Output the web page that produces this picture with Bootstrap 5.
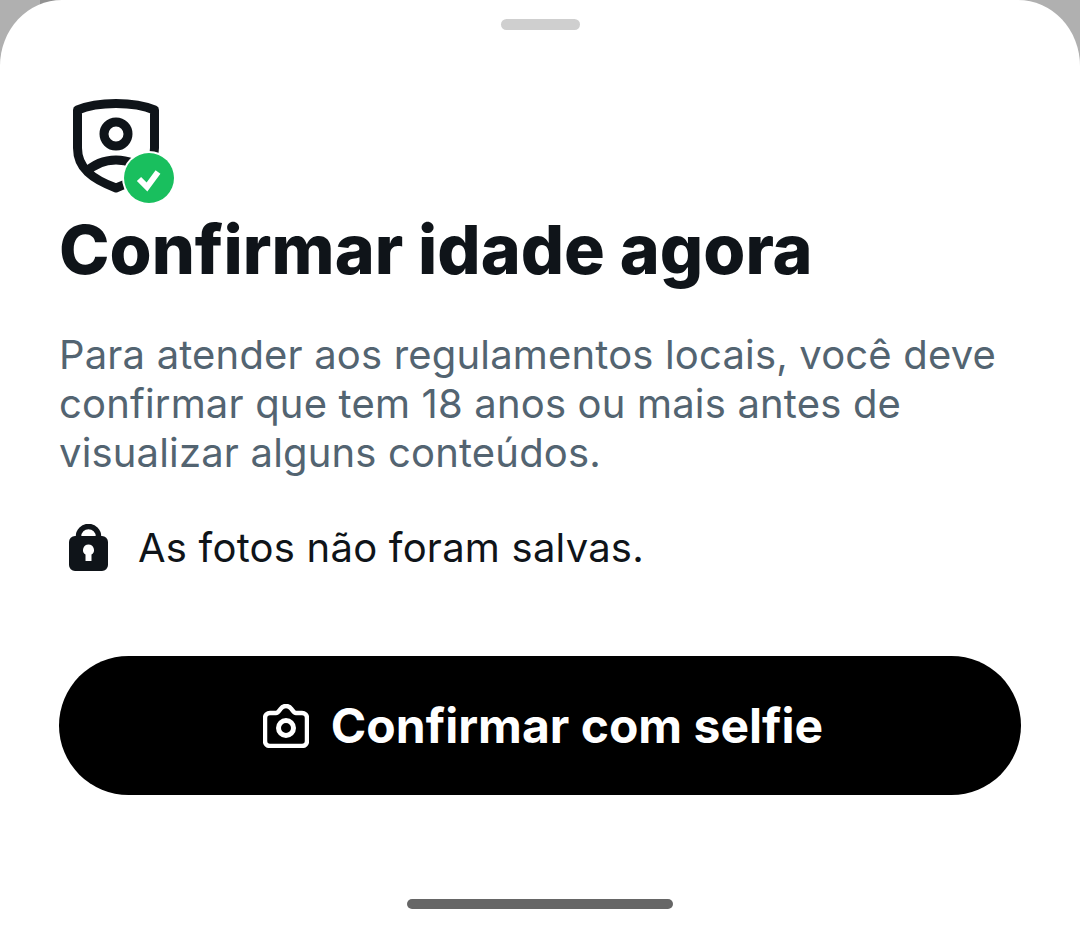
<!DOCTYPE html>
<html lang="en">
<head>
  <meta charset="UTF-8">
  <title>Confirmar idade</title>
  <link href="https://cdn.jsdelivr.net/npm/bootstrap@5.3.0/dist/css/bootstrap.min.css" rel="stylesheet">
  <style>
    html, body { height: 933px; overflow: hidden; }
    body { background: linear-gradient(90deg, #b0b0b0 40px, #929292 40px, #929292 540px, #b0b0b0 540px); font-family: "Inter", "Liberation Sans", sans-serif; }
    .sheet { height: 933px; background: #fff; border-radius: 62px 62px 0 0 / 66px 66px 0 0; padding: 0 59px; }
    .grabber { width: 79px; height: 11px; border-radius: 6px; background: #cfcfcf; margin-top: 19px; }
    .shield-wrap { width: 120px; height: 112px; margin-top: 66px; margin-left: 1px; }
    .age-title { font-weight: 800; font-size: 68px; line-height: 78px; color: #0f1419; margin: 2px 0 0; white-space: nowrap; }
    .age-text { font-size: 40px; line-height: 49px; color: #536471; margin-top: 42px; letter-spacing: .17px; }
    .photo-note { font-size: 40px; line-height: 48px; color: #0f1419; margin-top: 47px; gap: 29px; padding-left: 10px; letter-spacing: .22px; }
    .selfie-btn { height: 139px; width: 962px; margin-top: 84px; background: #000; color: #fff; border: 0; border-radius: 70px; font-size: 48px; font-weight: 700; gap: 22px; padding: 0 0 0 6px; }
    .selfie-btn:hover { background: #000; color: #fff; }
    .home-bar { width: 266px; height: 10px; border-radius: 5px; background: #666; margin-top: 104px; }
  </style>
</head>
<body>
  <div class="sheet d-flex flex-column">
    <div class="grabber align-self-center"></div>
    <div class="shield-wrap">
      <svg width="120" height="112" viewBox="0 0 120 112">
        <path d="M17.500 14C28 9.500 42 7.500 56 7.500S84 9.500 94.500 14V52C94.500 72 80 83 56 92 32 83 17.500 72 17.500 52Z" fill="none" stroke="#0f1419" stroke-width="9" stroke-linejoin="round"/>
        <circle cx="56" cy="38" r="12" fill="none" stroke="#0f1419" stroke-width="9"/>
        <path d="M25 77C33 69 44 64 56 64S79 69 87 77" fill="none" stroke="#0f1419" stroke-width="9"/>
        <circle cx="89" cy="82" r="27" fill="#fff"/>
        <circle cx="89" cy="82" r="25" fill="#19bf5e"/>
        <path d="M79 83l8 8 11-15" fill="none" stroke="#fff" stroke-width="6"/>
      </svg>
    </div>
    <h1 class="age-title">Confirmar idade agora</h1>
    <p class="age-text mb-0">Para atender aos regulamentos locais, você deve confirmar que tem 18 anos ou mais antes de visualizar alguns conteúdos.</p>
    <div class="photo-note d-flex align-items-center">
      <svg width="40" height="48" viewBox="0 0 40 48">
        <path d="M9.500 15V12.500a10 10 0 0 1 20 0V15" fill="none" stroke="#0f1419" stroke-width="5.500"/>
        <path fill-rule="evenodd" fill="#0f1419" d="M6 12H33a6 6 0 0 1 6 6V41a6 6 0 0 1-6 6H6a6 6 0 0 1-6-6V18a6 6 0 0 1 6-6ZM19.500 20.500a5.500 5.500 0 0 0-3 10.100V37h6V30.600a5.500 5.500 0 0 0-3-10.100Z"/>
      </svg>
      <span>As fotos não foram salvas.</span>
    </div>
    <button type="button" class="btn selfie-btn d-flex align-items-center justify-content-center">
      <svg width="46" height="44" viewBox="0 0 46 44">
        <path d="M7 9H13C15 9 16 7 17.500 5 19 3 20 2 23 2S27 3 28.500 5C30 7 31 9 33 9H39A5 5 0 0 1 44 14V37A5 5 0 0 1 39 42H7A5 5 0 0 1 2 37V14A5 5 0 0 1 7 9Z" fill="none" stroke="#fff" stroke-width="4.500"/>
        <circle cx="23" cy="24" r="7.500" fill="none" stroke="#fff" stroke-width="5"/>
      </svg>
      <span>Confirmar com selfie</span>
    </button>
    <div class="home-bar align-self-center"></div>
  </div>
</body>
</html>
